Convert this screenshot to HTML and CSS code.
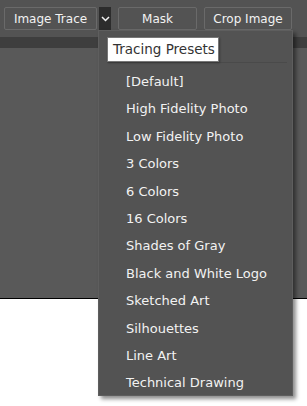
FILE: index.html
```html
<!DOCTYPE html>
<html lang="en">
  <head>
    <meta charset="UTF-8" />
    <title>Image Trace presets</title>
    <link rel="stylesheet" href="styles.css">
  </head>
  <body>
    <div class="toolbar">
      <button class="btn btn-trace">Image Trace</button>
      <button class="btn-drop">
        <svg width="9" height="6" viewBox="0 0 9 6">
          <polyline points="1,1 4.5,4.5 8,1" fill="none" stroke="#f2f2f2" stroke-width="1.5" />
        </svg>
      </button>
      <button class="btn btn-mask">Mask</button>
      <button class="btn btn-crop">Crop Image</button>
    </div>
    <div class="band"></div>
    <div class="canvas"></div>

    <div class="menu">
      <div class="menu-head"></div>
      <ul class="menu-list">
        <li>[Default]</li>
        <li>High Fidelity Photo</li>
        <li>Low Fidelity Photo</li>
        <li>3 Colors</li>
        <li>6 Colors</li>
        <li>16 Colors</li>
        <li>Shades of Gray</li>
        <li>Black and White Logo</li>
        <li>Sketched Art</li>
        <li>Silhouettes</li>
        <li>Line Art</li>
        <li>Technical Drawing</li>
      </ul>
    </div>
    <div class="tooltip">Tracing Presets</div>
  </body>
</html>
```

FILE: styles.css
```css
body {
  margin: 0;
  background-color: #fff;
  font-family: Tahoma, "DejaVu Sans", sans-serif;
  font-size: 13px;
}

.toolbar {
  display: flex;
  align-items: center;
  height: 37px;
  padding-left: 4px;
  background-color: #535353;
  box-sizing: border-box;
}

.btn {
  height: 23px;
  padding: 0;
  background-color: #535353;
  border: 1px solid #6a6a6a;
  border-radius: 2px;
  color: #f2f2f2;
  font-family: inherit;
  font-size: 12px;
}

.btn-trace {
  width: 93px;
}

.btn-drop {
  display: flex;
  align-items: center;
  justify-content: center;
  width: 12px;
  height: 24px;
  margin-left: 2px;
  margin-top: 1px;
  padding: 0;
  border: none;
  background-color: #2c2c2c;
}

.btn-mask {
  width: 79px;
  margin-left: 7px;
}

.btn-crop {
  width: 88px;
  margin-left: 7px;
}

.band {
  height: 11px;
  background-color: #3e3e3e;
}

.canvas {
  height: 250px;
  background-color: #595959;
  border-bottom: 1px solid #000;
}

.menu {
  position: absolute;
  left: 98px;
  top: 30px;
  width: 195px;
  height: 366px;
  box-sizing: border-box;
  background-color: #535353;
  border: 1px solid #5e5e5e;
  box-shadow: 3px 3px 4px rgba(0, 0, 0, 0.45);
}

.menu-head {
  height: 31px;
  margin: 0 5px 0 8px;
  border-bottom: 1px solid #4a4a4a;
}

.menu-list {
  list-style: none;
  margin: 5px 0 0;
  padding: 0 0 0 27px;
}

.menu-list li {
  height: 27.4px;
  line-height: 27.4px;
  color: #f2f2f2;
  white-space: nowrap;
}

.tooltip {
  position: absolute;
  left: 107px;
  top: 37px;
  height: 25px;
  box-sizing: border-box;
  padding: 0 3px 0 5px;
  line-height: 23px;
  white-space: nowrap;
  background-color: #fff;
  border: 1px solid #777;
  color: #333;
  font-size: 13.5px;
  box-shadow: 1px 1px 2px rgba(0, 0, 0, 0.3);
}
```
